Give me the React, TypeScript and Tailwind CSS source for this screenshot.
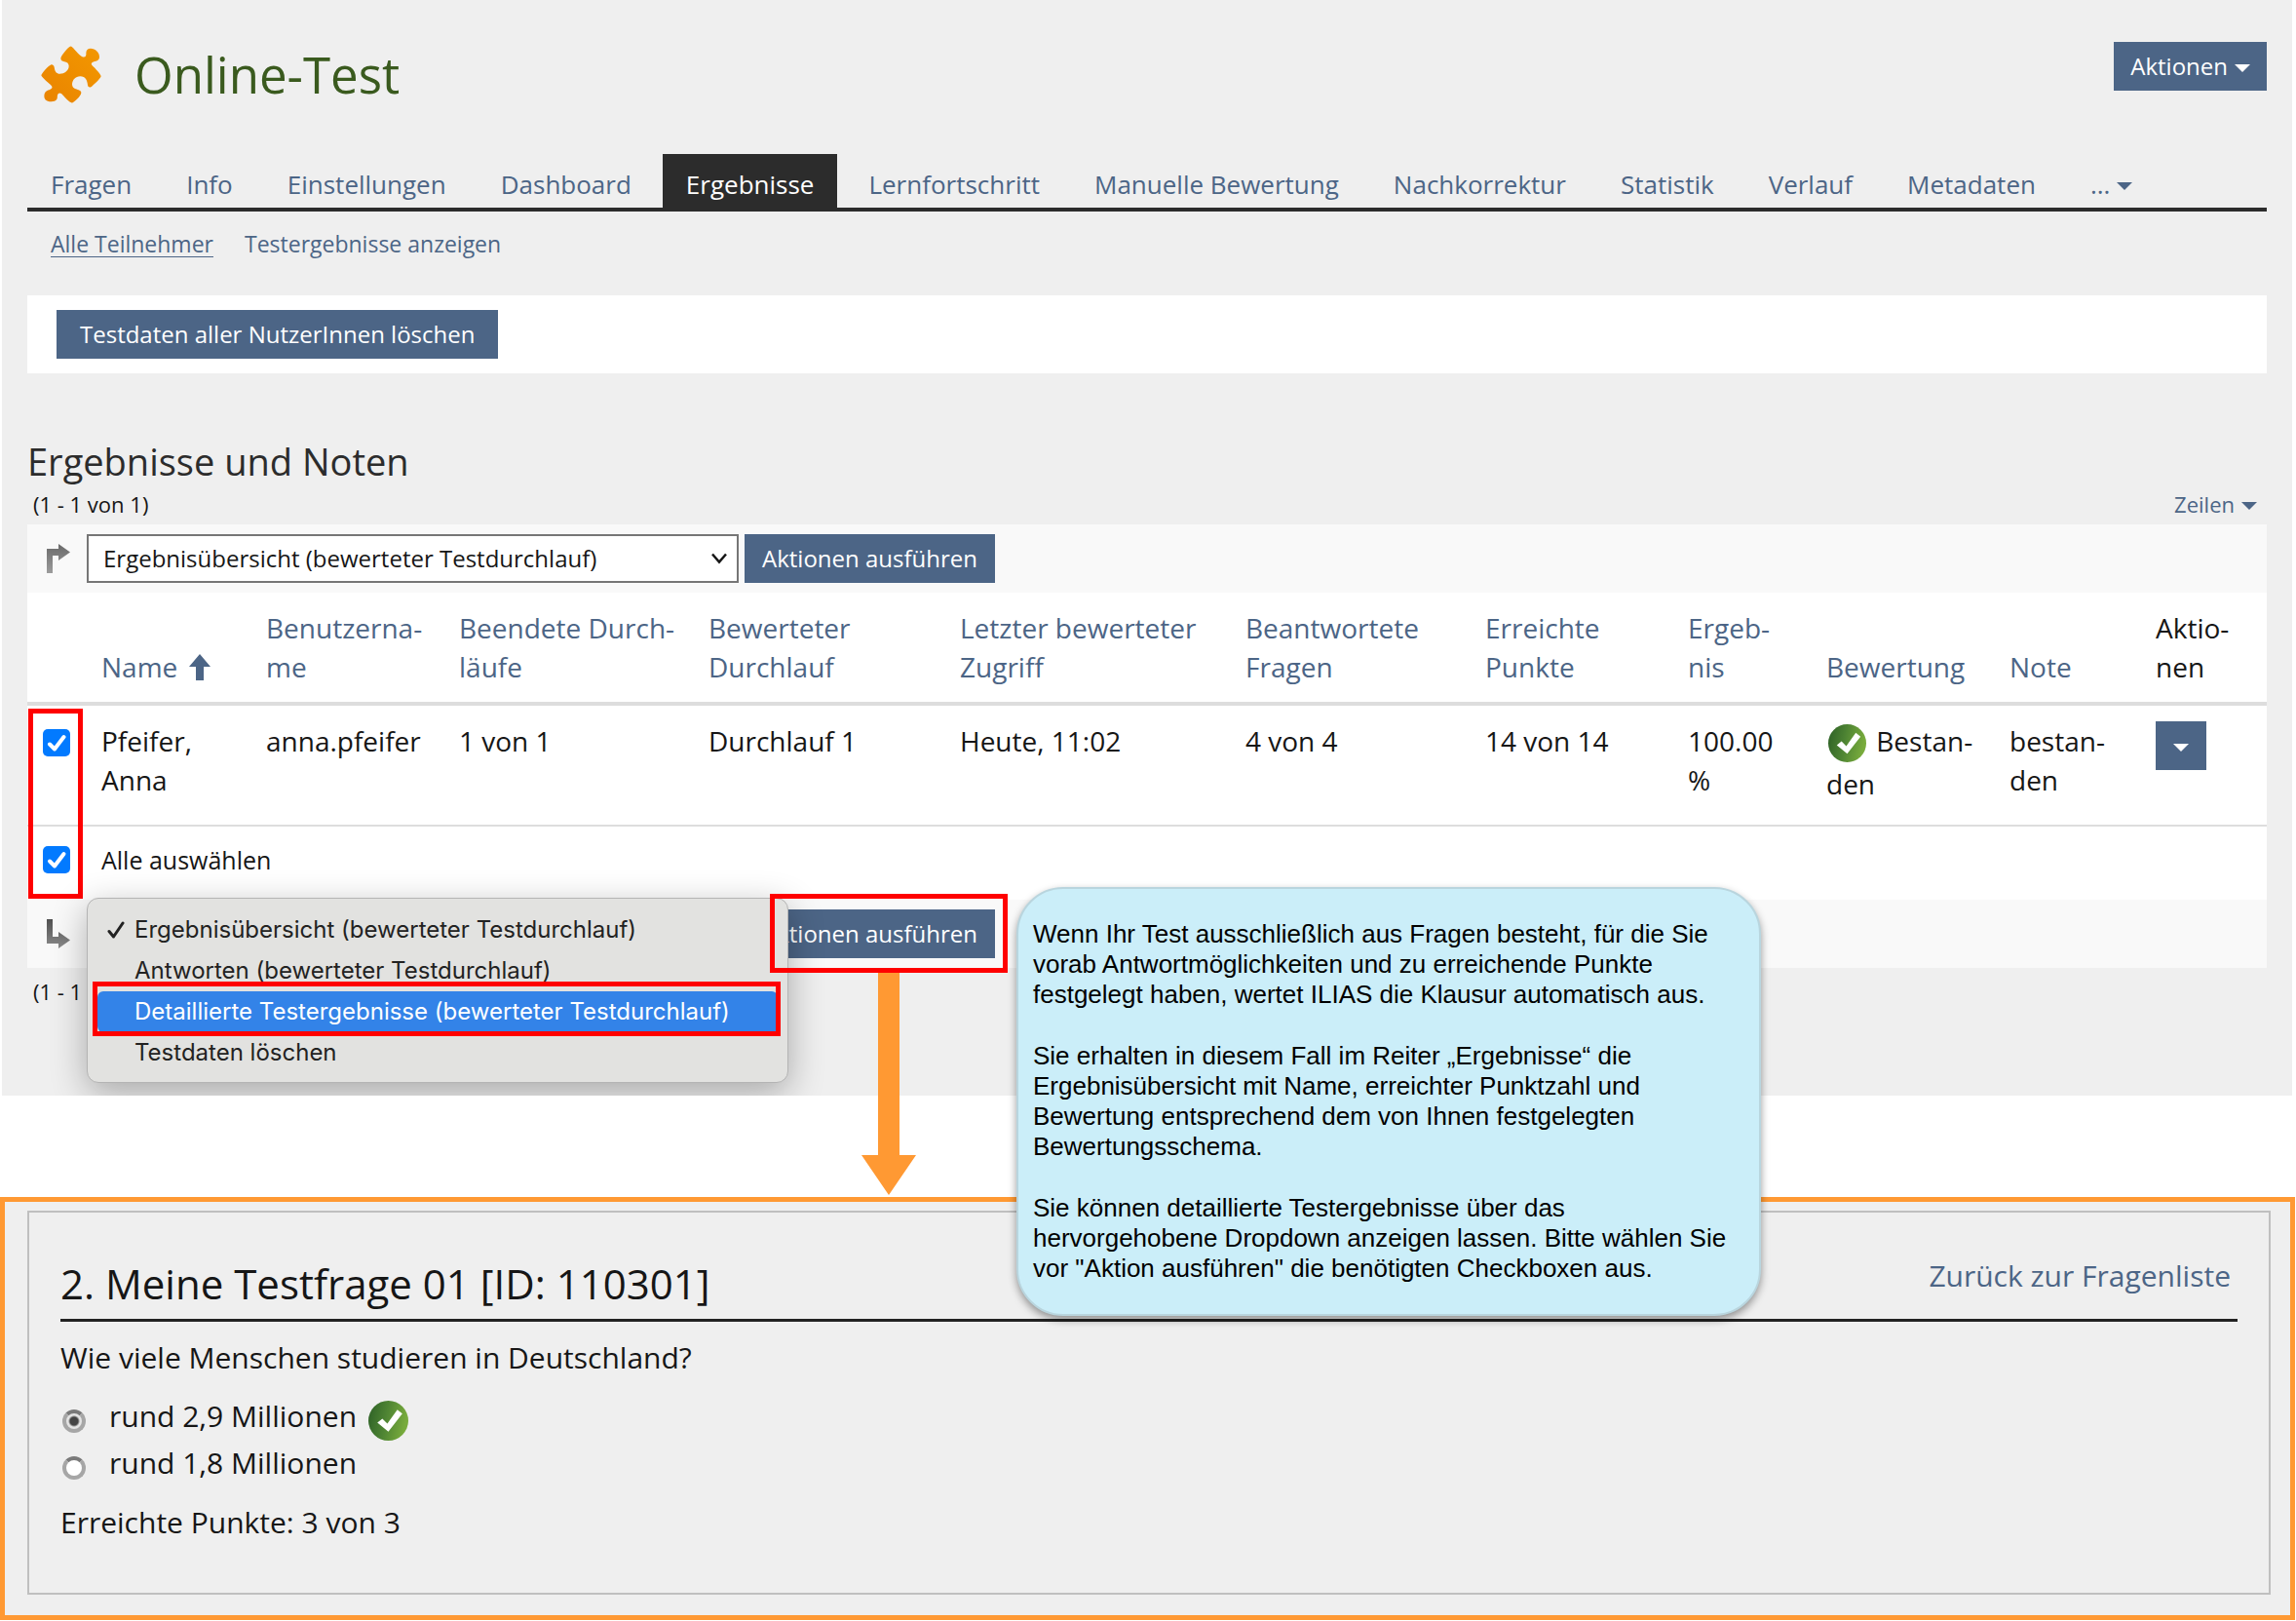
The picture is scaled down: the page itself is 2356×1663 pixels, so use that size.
import React from "react";

const TABS = [
  "Fragen",
  "Info",
  "Einstellungen",
  "Dashboard",
  "Ergebnisse",
  "Lernfortschritt",
  "Manuelle Bewertung",
  "Nachkorrektur",
  "Statistik",
  "Verlauf",
  "Metadaten",
];

const COLUMNS: string[][] = [
  ["Benutzerna-", "me"],
  ["Beendete Durch-", "läufe"],
  ["Bewerteter", "Durchlauf"],
  ["Letzter bewerteter", "Zugriff"],
  ["Beantwortete", "Fragen"],
  ["Erreichte", "Punkte"],
  ["Ergeb-", "nis"],
  ["Bewertung"],
  ["Note"],
];

const OPTIONS = [
  "Ergebnisübersicht (bewerteter Testdurchlauf)",
  "Antworten (bewerteter Testdurchlauf)",
  "Detaillierte Testergebnisse (bewerteter Testdurchlauf)",
  "Testdaten löschen",
];

function Caret() {
  return (
    <svg viewBox="0 0 16 8" className="mt-1 h-2 w-4 shrink-0" fill="currentColor" aria-hidden="true">
      <path d="M0 0h16L8 8z" />
    </svg>
  );
}

function PuzzleIcon() {
  return (
    <svg viewBox="36 26 186 176" className="h-[59px] w-[62px]" aria-hidden="true">
      <defs>
        <linearGradient id="puzzle" x1="0" y1="1" x2="1" y2="0">
          <stop offset="0" stopColor="#e98300" />
          <stop offset="1" stopColor="#f39800" />
        </linearGradient>
      </defs>
      <path
        fill="url(#puzzle)"
        d="M128 27C132 27 139 37 144 42C150 49 158 58 165 60C174 62 176 55 175 48C175 39 180 34 189 34C203 34 217 46 216 61C215 71 207 73 199 74C191 76 189 81 194 86C203 94 220 113 221 119C220 125 197 147 190 152C185 154 181 152 180 146C179 132 173 119 157 119C142 119 133 130 132 143C132 151 136 155 143 158C151 161 160 162 160 170C159 180 138 200 131 201C124 200 111 186 104 178C99 172 94 169 89 173C85 177 88 184 85 190C80 198 69 198 62 197C52 196 46 190 46 181C46 171 50 165 58 162C68 159 73 155 69 149C63 141 38 123 37 116C39 109 59 86 68 83C75 82 77 89 78 96C79 104 84 112 94 112C108 112 122 102 122 88C122 79 116 75 108 74C102 73 97 71 97 64C98 56 119 29 128 27Z"
      />
    </svg>
  );
}

function PassedIcon({ id, className }: { id: string; className: string }) {
  return (
    <svg viewBox="0 0 40 40" className={className} role="img" aria-label="Richtig">
      <defs>
        <linearGradient id={id} x1="0" y1="0" x2="1" y2="0.2">
          <stop offset="0" stopColor="#2c5f26" />
          <stop offset="0.5" stopColor="#4e8433" />
          <stop offset="1" stopColor="#78ab3c" />
        </linearGradient>
      </defs>
      <circle cx="20" cy="20" r="20" fill={`url(#${id})`} />
      <path d="M9 22l5-4 5 5L29 9l5 4-14 18z" fill="#fff" />
    </svg>
  );
}

function TurnArrow({ id, down }: { id: string; down?: boolean }) {
  return (
    <svg viewBox="0 0 24 30" className="h-[30px] w-6" aria-hidden="true">
      <defs>
        <linearGradient id={id} x1="0" y1="0" x2="0" y2="1">
          <stop offset="0" stopColor={down ? "#505050" : "#696969"} />
          <stop offset="1" stopColor={down ? "#8c8c8c" : "#9c9c9c"} />
        </linearGradient>
      </defs>
      <path
        fill={`url(#${id})`}
        d={down ? "M0 0h6v18h6v-5l12 8.500-12 8.500v-5H0z" : "M0 5h12V0l12 8.500L12 17v-5H6v18H0z"}
      />
    </svg>
  );
}

function Checkbox({ id, label }: { id: string; label: string }) {
  return (
    <span className="grid size-7">
      <input
        id={id}
        type="checkbox"
        defaultChecked
        aria-label={label}
        className="col-start-1 row-start-1 size-7 appearance-none rounded-[5px] bg-[#027aff]"
      />
      <svg
        viewBox="0 0 28 28"
        className="pointer-events-none col-start-1 row-start-1 size-7"
        fill="none"
        stroke="#fff"
        strokeWidth="4"
        strokeLinecap="round"
        strokeLinejoin="round"
        aria-hidden="true"
      >
        <path d="M7 15.500l5 5L21.500 8" />
      </svg>
    </span>
  );
}

function ActionSelect({ id }: { id: string }) {
  return (
    <span className="grid w-[669px] items-center">
      <select
        id={id}
        aria-label="Aktion wählen"
        className="col-start-1 row-start-1 h-[50px] w-full appearance-none border-2 border-[#767676] bg-white px-[15px] text-[24px] text-[#161616]"
      >
        {OPTIONS.map((o) => (
          <option key={o}>{o}</option>
        ))}
      </select>
      <svg
        viewBox="0 0 16 12"
        className="pointer-events-none col-start-1 row-start-1 mr-3 h-3 w-4 justify-self-end"
        fill="none"
        stroke="#161616"
        strokeWidth="2.500"
        aria-hidden="true"
      >
        <path d="M1 1.500l7 8 7-8" />
      </svg>
    </span>
  );
}

function Button({ children, className }: { children: React.ReactNode; className: string }) {
  return (
    <button
      type="button"
      className={`flex h-[50px] items-center bg-[#4c6586] text-[24px] whitespace-nowrap text-white ${className}`}
    >
      {children}
    </button>
  );
}

function Header() {
  return (
    <>
      <header className="flex items-start justify-between pt-[43px]">
        <div className="flex h-[66px] items-center gap-[34px] pl-[14px]">
          <PuzzleIcon />
          <h1 className="text-[51px] leading-[60px] text-[#3a5a1e]">Online-Test</h1>
        </div>
        <Button className="gap-[7px] px-[17px]">
          Aktionen <Caret />
        </Button>
      </header>

      <nav className="mt-[49px] flex gap-2 border-b-4 border-[#2c2c2c] text-[26px] leading-9">
        {TABS.map((t) => (
          <a
            key={t}
            href="#"
            className={
              t === "Ergebnisse"
                ? "bg-[#2c2c2c] px-6 pt-[13px] pb-[6px] whitespace-nowrap text-white"
                : "px-6 pt-[13px] pb-[6px] whitespace-nowrap text-[#4c6586]"
            }
          >
            {t}
          </a>
        ))}
        <a
          href="#"
          aria-label="Weitere Reiter"
          className="flex items-center gap-[7px] px-6 pt-[13px] pb-[6px] text-[#4c6586]"
        >
          ... <Caret />
        </a>
      </nav>

      <nav className="mt-[17px] flex gap-8 px-6 text-[23px] leading-8 text-[#4c6586]">
        <a href="#" className="underline decoration-1 underline-offset-4">
          Alle Teilnehmer
        </a>
        <a href="#">Testergebnisse anzeigen</a>
      </nav>

      <div className="mt-[37px] flex bg-white px-[30px] py-[15px]">
        <Button className="px-6">Testdaten aller NutzerInnen löschen</Button>
      </div>
    </>
  );
}

function ResultsTable() {
  const th = "pl-3 pt-4 pb-4 align-bottom font-normal border-b-4 border-[#ddd]";
  const td = "pl-3 pt-4 align-top border-b-2 border-[#ddd]";
  return (
    <div className="relative bg-white">
      <table className="w-full table-fixed border-separate border-spacing-0 text-left text-[28px] leading-10 text-[#161616]">
        <colgroup>
          <col className="w-[64px]" />
          <col className="w-[169px]" />
          <col className="w-[198px]" />
          <col className="w-[256px]" />
          <col className="w-[258px]" />
          <col className="w-[293px]" />
          <col className="w-[246px]" />
          <col className="w-[208px]" />
          <col className="w-[142px]" />
          <col className="w-[188px]" />
          <col className="w-[150px]" />
          <col className="w-[126px]" />
        </colgroup>
        <thead>
          <tr>
            <th className={th}></th>
            <th className={th}>
              <a href="#" className="flex items-center gap-3 text-[#4c6586]">
                Name
                <svg viewBox="0 0 22 27" className="h-[27px] w-[22px]" fill="currentColor" aria-hidden="true">
                  <path d="M11 0l11 13h-7v14H7V13H0z" />
                </svg>
              </a>
            </th>
            {COLUMNS.map((c) => (
              <th key={c[0]} className={th}>
                <a href="#" className="text-[#4c6586]">
                  {c[0]}
                  {c[1] && <br />}
                  {c[1]}
                </a>
              </th>
            ))}
            <th className={th}>
              Aktio-
              <br />
              nen
            </th>
          </tr>
        </thead>
        <tbody>
          <tr className="h-[124px]">
            <td className="border-b-2 border-[#ddd] pt-6 pl-4 align-top">
              <Checkbox id="row-1" label="Pfeifer, Anna" />
            </td>
            <td className={td}>
              Pfeifer,
              <br />
              Anna
            </td>
            <td className={td}>anna.pfeifer</td>
            <td className={td}>1 von 1</td>
            <td className={td}>Durchlauf 1</td>
            <td className={td}>Heute, 11:02</td>
            <td className={td}>4 von 4</td>
            <td className={td}>14 von 14</td>
            <td className={td}>
              100.00
              <br />%
            </td>
            <td className={`${td} whitespace-nowrap`}>
              <PassedIcon id="passed-row" className="mr-[3px] mb-[2px] ml-[2px] inline-block size-[39px] align-middle" /> Bestan-
              <br />
              den
            </td>
            <td className={td}>
              bestan-
              <br />
              den
            </td>
            <td className={td}>
              <button
                type="button"
                aria-label="Aktionen"
                className="flex h-[50px] w-[52px] items-center justify-center bg-[#4c6586] text-white"
              >
                <Caret />
              </button>
            </td>
          </tr>
          <tr className="h-[75px]">
            <td className="pt-5 pl-4 align-top">
              <Checkbox id="select-all" label="Alle auswählen" />
            </td>
            <td colSpan={11} className="pt-[14px] pl-3 align-top text-[25px]">
              <label htmlFor="select-all">Alle auswählen</label>
            </td>
          </tr>
        </tbody>
      </table>
      <div className="pointer-events-none absolute top-[119px] left-px h-[195px] w-14 border-5 border-[#ff0000]" />
    </div>
  );
}

function OptionMenu() {
  return (
    <>
      <ul
        role="listbox"
        aria-label="Aktion wählen"
        className="absolute -top-3 left-0 h-[190px] w-[720px] rounded-xl border border-[#b4b4b4] bg-[#e2e2e0] px-[10px] pt-[11px] text-[24px] leading-[42px] text-[#222] shadow-[0_10px_36px_rgba(0,0,0,0.3)]"
        style={{ fontFamily: 'Inter, "Liberation Sans", sans-serif' }}
      >
        {OPTIONS.map((o, i) => (
          <li
            key={o}
            role="option"
            aria-selected={i === 0}
            className={
              i === 2
                ? "flex items-center rounded-md bg-[#3383e8] text-white"
                : "flex items-center"
            }
          >
            <span className="flex w-[38px] shrink-0 pl-[10px]">
              {i === 0 && (
                <svg
                  viewBox="0 0 18 18"
                  className="size-[18px]"
                  fill="none"
                  stroke="#222"
                  strokeWidth="3"
                  strokeLinecap="round"
                  strokeLinejoin="round"
                  aria-hidden="true"
                >
                  <path d="M2 10.500l4.500 5.500L16 2" />
                </svg>
              )}
            </span>
            <span className="whitespace-nowrap">{o}</span>
          </li>
        ))}
      </ul>
      <div className="pointer-events-none absolute top-[74px] left-[6px] h-14 w-[706px] border-5 border-[#ff0000]" />
      <div className="pointer-events-none absolute -top-4 left-[701px] h-[81px] w-[244px] border-5 border-[#ff0000]" />
    </>
  );
}

function Question() {
  return (
    <section className="mt-[104px] mr-px border-5 border-[#ff9933] bg-[#efefef] pt-[9px] pr-5 pb-[21px] pl-[23px] text-[30px] leading-10 text-[#161616]">
      <div className="border-2 border-[#bfbfbf] px-8 pt-[45px] pb-[52px]">
        <div className="flex items-start justify-between border-b-3 border-[#222] pr-[7px] pb-2">
          <h2 className="text-[42px] leading-[56px]">2. Meine Testfrage 01 [ID: 110301]</h2>
          <a href="#" className="text-[#4c6586]">
            Zurück zur Fragenliste
          </a>
        </div>
        <fieldset className="mt-[17px]">
          <legend>Wie viele Menschen studieren in Deutschland?</legend>
          <div className="mt-5 flex h-12 items-start">
            <input
              id="answer-1"
              name="answer"
              type="radio"
              defaultChecked
              className="mt-[13px] mr-6 ml-[2px] size-6 appearance-none rounded-full border-4 border-[#a6a6a6] border-t-[#7a7a7a] bg-[radial-gradient(circle,#444_4px,#e4e4e4_6px)]"
            />
            <label htmlFor="answer-1">rund 2,9 Millionen</label>
            <PassedIcon id="passed-answer" className="mt-1 ml-3 size-[41px]" />
          </div>
          <div className="flex h-12 items-start">
            <input
              id="answer-2"
              name="answer"
              type="radio"
              className="mt-[13px] mr-6 ml-[2px] size-6 appearance-none rounded-full border-4 border-[#a6a6a6] border-t-[#7a7a7a] bg-white"
            />
            <label htmlFor="answer-2">rund 1,8 Millionen</label>
          </div>
        </fieldset>
        <p className="mt-[13px]">Erreichte Punkte: 3 von 3</p>
      </div>
    </section>
  );
}

function Callout() {
  return (
    <aside
      className="absolute top-[910px] left-[1043px] flex h-[440px] w-[764px] flex-col gap-8 rounded-[48px] border-2 border-[#b9d5de] bg-[#cbeef9] px-[15px] pt-[31px] text-[26px] leading-[31px] text-black shadow-[0_4px_8px_rgba(0,0,0,0.4)]"
      style={{ fontFamily: '"Liberation Sans", Arial, sans-serif' }}
    >
      <p>
        Wenn Ihr Test ausschließlich aus Fragen besteht, für die Sie
        <br />
        vorab Antwortmöglichkeiten und zu erreichende Punkte
        <br />
        festgelegt haben, wertet ILIAS die Klausur automatisch aus.
      </p>
      <p>
        Sie erhalten in diesem Fall im Reiter „Ergebnisse“ die
        <br />
        Ergebnisübersicht mit Name, erreichter Punktzahl und
        <br />
        Bewertung entsprechend dem von Ihnen festgelegten
        <br />
        Bewertungsschema.
      </p>
      <p>
        Sie können detaillierte Testergebnisse über das
        <br />
        hervorgehobene Dropdown anzeigen lassen. Bitte wählen Sie
        <br />
        vor "Aktion ausführen" die benötigten Checkboxen aus.
      </p>
    </aside>
  );
}

export default function App() {
  return (
    <div className="relative bg-white" style={{ fontFamily: '"Open Sans", "Noto Sans", sans-serif' }}>
      <main className="mr-1 ml-[2px] overflow-hidden bg-[#efefef] px-[26px] pb-[92px]">
        <Header />

        <h2 className="mt-[66px] text-[38px] leading-12 text-[#2c2c2c]">Ergebnisse und Noten</h2>
        <div className="mt-[5px] mb-[6px] flex justify-between pr-[10px] pl-[6px] text-[22px] leading-[30px] text-[#161616]">
          <span>(1 - 1 von 1)</span>
          <button type="button" className="flex items-center gap-[7px] text-[#4c6586]">
            Zeilen <Caret />
          </button>
        </div>

        <div className="flex items-center bg-[#f9f9f9] py-[10px] pl-5">
          <TurnArrow id="turn-top" />
          <div className="ml-[17px] flex gap-[6px]">
            <ActionSelect id="action-top" />
            <Button className="px-[18px]">Aktionen ausführen</Button>
          </div>
        </div>

        <ResultsTable />

        <div className="flex items-center bg-[#f9f9f9] py-[10px] pl-5">
          <TurnArrow id="turn-bottom" down />
          <div className="relative ml-[17px] flex gap-[6px]">
            <ActionSelect id="action-bottom" />
            <Button className="px-[18px]">Aktionen ausführen</Button>
            <OptionMenu />
          </div>
        </div>
        <p className="mt-[9px] pl-[6px] text-[22px] leading-[30px] text-[#161616]">(1 - 1 von 1)</p>
      </main>

      <Question />

      <svg
        viewBox="0 0 56 228"
        className="absolute top-[998px] left-[884px] h-[228px] w-14"
        fill="#ff9933"
        aria-hidden="true"
      >
        <path d="M17 0h22v187h17l-28 41L0 187h17z" />
      </svg>
      <Callout />
    </div>
  );
}
